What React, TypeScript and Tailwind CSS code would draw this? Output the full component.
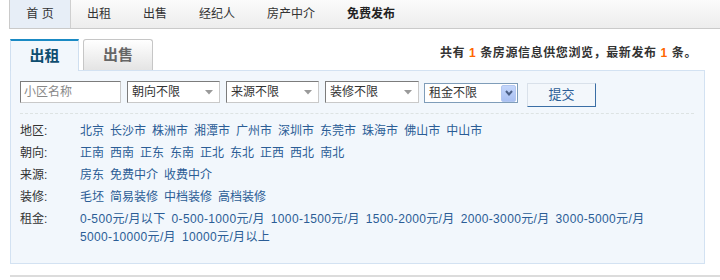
const navItems = [
  { label: "首 页", active: true },
  { label: "出租" },
  { label: "出售" },
  { label: "经纪人" },
  { label: "房产中介" },
  { label: "免费发布", bold: true },
];

const filters = [
  {
    label: "地区:",
    links: ["北京", "长沙市", "株洲市", "湘潭市", "广州市", "深圳市", "东莞市", "珠海市", "佛山市", "中山市"],
  },
  {
    label: "朝向:",
    links: ["正南", "西南", "正东", "东南", "正北", "东北", "正西", "西北", "南北"],
  },
  { label: "来源:", links: ["房东", "免费中介", "收费中介"] },
  { label: "装修:", links: ["毛坯", "简易装修", "中档装修", "高档装修"] },
  {
    label: "租金:",
    wide: true,
    links: [
      "0-500元/月以下",
      "0-500-1000元/月",
      "1000-1500元/月",
      "1500-2000元/月",
      "2000-3000元/月",
      "3000-5000元/月",
      "5000-10000元/月",
      "10000元/月以上",
    ],
  },
];

function FakeSelect({ text, width }: { text: string; width: string }) {
  return (
    <div
      className={`${width} h-[22px] flex items-center justify-between bg-white border border-t-[#7c7c7c] border-l-[#7c7c7c] border-r-[#c9c9c9] border-b-[#c9c9c9] pl-[4px] pr-[6px] text-[#333]`}
    >
      <span>{text}</span>
      <svg width="8" height="5" viewBox="0 0 8 5">
        <polygon points="0,0 8,0 4,4.5" fill="#9a9a9a" />
      </svg>
    </div>
  );
}

export default function App() {
  return (
    <div
      className="w-[720px] h-[280px] bg-white text-[12px] text-[#333] overflow-hidden"
      style={{ fontFamily: '"Liberation Sans", "Noto Sans CJK SC", sans-serif' }}
    >
      {/* Top nav */}
      <nav className="ml-[9px] h-[29px] flex border-l border-b border-[#cacaca] bg-gradient-to-b from-[#fbfbfb] to-[#ededed]">
        {navItems.map((n) =>
          n.active ? (
            <div
              key={n.label}
              className="w-[61px] flex items-center justify-center bg-[#e7eef7] border-r border-[#cfcfcf] whitespace-pre"
            >
              {n.label}
            </div>
          ) : (
            <div
              key={n.label}
              className={`px-4 flex items-center ${n.bold ? "font-bold text-[#222]" : ""}`}
            >
              {n.label}
            </div>
          )
        )}
      </nav>

      <div className="ml-[10px] w-[695px] mt-[10px]">
        {/* Tabs + counter */}
        <div className="flex items-stretch h-[31px]">
          <div className="relative z-10 w-[69px] h-[32px] flex items-center justify-center bg-[#f2f7fc] border-t-2 border-t-[#1a8ac4] border-x border-x-[#cfdff0] text-[15px] font-bold text-[#0f4e70]">
            出租
          </div>
          <div className="ml-[4px] w-[70px] flex items-center justify-center rounded-t-[3px] border border-b-0 border-[#c6c6c6] bg-gradient-to-b from-[#ffffff] to-[#e4e4e4] text-[15px] font-bold text-[#666]">
            出售
          </div>
          <div className="ml-auto mr-[8px] mt-[5px] font-bold text-[#333] tracking-[0.6px]">
            共有 <span className="text-[#ff6600]">1</span> 条房源信息供您浏览，最新发布{" "}
            <span className="text-[#ff6600]">1</span> 条。
          </div>
        </div>

        {/* Panel */}
        <div className="h-[194px] border border-[#d3e2f2] bg-[#f2f7fc] pt-[10px] pl-[9px] pr-[10px]">
          <div className="flex items-start">
            <div className="w-[101px] h-[22px] flex items-center bg-white border border-t-[#7c7c7c] border-l-[#7c7c7c] border-r-[#c9c9c9] border-b-[#c9c9c9] pl-[3px] text-[#888]">
              小区名称
            </div>
            <div className="ml-[6px]">
              <FakeSelect text="朝向不限" width="w-[93px]" />
            </div>
            <div className="ml-[6px]">
              <FakeSelect text="来源不限" width="w-[93px]" />
            </div>
            <div className="ml-[6px]">
              <FakeSelect text="装修不限" width="w-[94px]" />
            </div>
            <div className="ml-[5px] mt-[2px] w-[94px] h-[20px] flex items-center justify-between bg-white border border-[#7f9db9] pl-[4px] pr-[1px]">
              <span>租金不限</span>
              <div className="w-[15px] h-[17px] rounded-[2px] bg-gradient-to-b from-[#c4d6fb] to-[#a9c0f2] border border-[#b3c7f0] flex items-center justify-center">
                <svg width="8" height="6" viewBox="0 0 8 6">
                  <polyline points="1,1 4,4.5 7,1" fill="none" stroke="#4b5f86" strokeWidth="2" />
                </svg>
              </div>
            </div>
            <button className="ml-[9px] mt-[2px] w-[69px] h-[24px] bg-[#f3f7fb] border border-t-[#d9e1ea] border-l-[#d9e1ea] border-r-[#3a6ea5] border-b-[#3a6ea5] text-[13px] text-[#2c5e96]">
              提交
            </button>
          </div>

          <div className="mt-[6px] border-t border-dashed border-[#dde3e3]" />

          <div className="mt-[8px]">
            {filters.map((f) => (
              <div key={f.label} className="flex leading-[18px] mb-[4px]">
                <div className="w-[60px] shrink-0 text-[#333]">{f.label}</div>
                <div className={`flex flex-wrap w-[580px] ${f.wide ? "tracking-[0.35px]" : ""}`}>
                  {f.links.map((l) => (
                    <a key={l} className="mr-[6px] text-[#2b5d96] cursor-pointer">
                      {l}
                    </a>
                  ))}
                </div>
              </div>
            ))}
          </div>
        </div>
      </div>

      <div className="ml-[10px] mt-[11px] h-[2px] bg-[#dcdcdc]" />
    </div>
  );
}
